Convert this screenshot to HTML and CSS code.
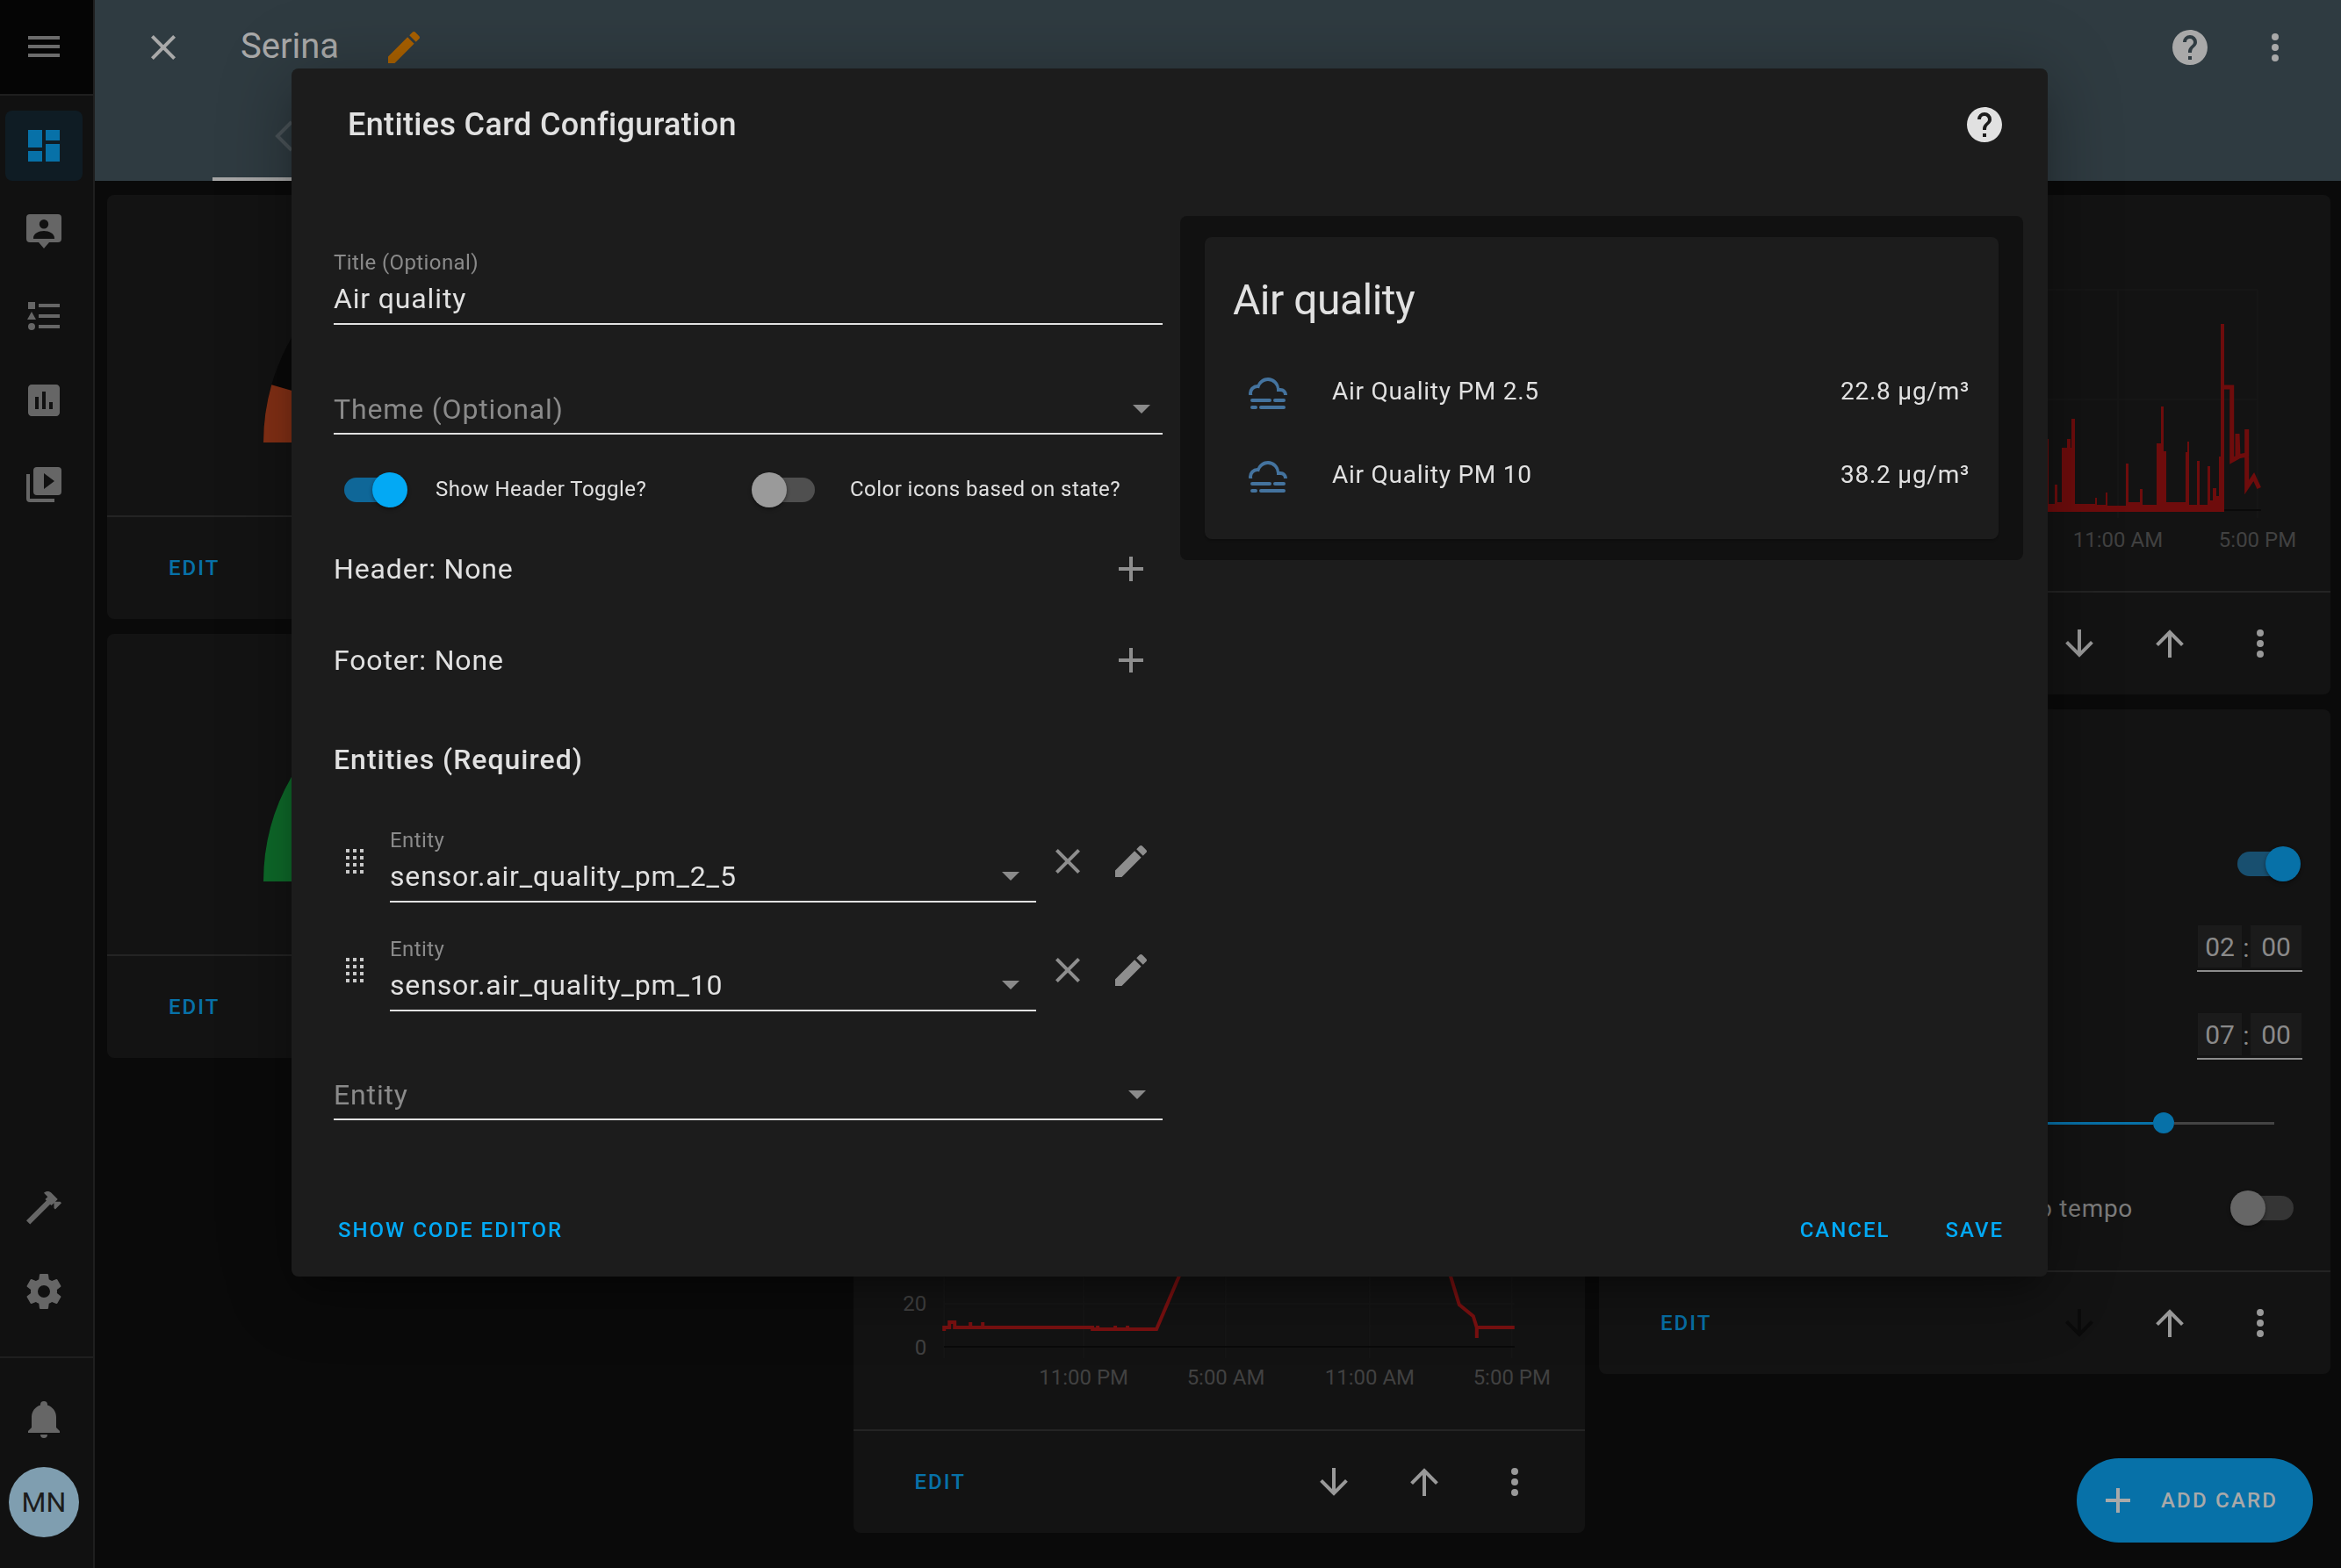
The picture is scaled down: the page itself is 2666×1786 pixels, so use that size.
FILE: index.html
```html
<!DOCTYPE html>
<html lang="en">

<head>
    <meta charset="UTF-8">
    <title>Serina - Entities Card Configuration</title>
    <link rel="stylesheet" href="styles.css">
</head>

<body>
    <svg class="sprite" xmlns="http://www.w3.org/2000/svg">
        <symbol id="i-menu" viewBox="0 0 24 24"><path d="M3,6H21V8H3V6M3,11H21V13H3V11M3,16H21V18H3V16Z" /></symbol>
        <symbol id="i-dashboard" viewBox="0 0 24 24"><path d="M13,3V9H21V3M13,21H21V11H13M3,21H11V15H3M3,13H11V3H3V13Z" /></symbol>
        <symbol id="i-person" viewBox="0 0 24 24"><path fill-rule="evenodd" d="M4 2H20A2 2 0 0 1 22 4V16A2 2 0 0 1 20 18H15L12 21.5L9 18H4A2 2 0 0 1 2 16V4A2 2 0 0 1 4 2Z M12 5A2.6 2.6 0 1 0 12 10.2A2.6 2.6 0 1 0 12 5Z M6 15.5C6 13 9 11.5 12 11.5C15 11.5 18 13 18 15.5V16H6Z" /></symbol>
        <symbol id="i-list" viewBox="0 0 24 24"><path d="M5,9.5L7.5,14H2.5L5,9.5M3,4H7V8H3V4M5,20A2,2 0 0,0 7,18A2,2 0 0,0 5,16A2,2 0 0,0 3,18A2,2 0 0,0 5,20M9,5V7H21V5H9M9,19H21V17H9V19M9,13H21V11H9V13Z" /></symbol>
        <symbol id="i-chart" viewBox="0 0 24 24"><path d="M9 17H7V10H9V17M13 17H11V7H13V17M17 17H15V13H17V17M19 3H5C3.9 3 3 3.9 3 5V19C3 20.1 3.9 21 5 21H19C20.1 21 21 20.1 21 19V5C21 3.9 20.1 3 19 3Z" /></symbol>
        <symbol id="i-play" viewBox="0 0 24 24"><path d="M4,6H2V20A2,2 0 0,0 4,22H18V20H4V6M20,2H8A2,2 0 0,0 6,4V16A2,2 0 0,0 8,18H20A2,2 0 0,0 22,16V4A2,2 0 0,0 20,2M12,14.5V5.5L18,10L12,14.5Z" /></symbol>
        <symbol id="i-hammer" viewBox="0 0 24 24"><path d="M2 19.63L13.43 8.2L12.72 7.5L14.14 6.07L12 3.89C13.2 2.7 15.09 2.7 16.27 3.89L19.87 7.5L18.45 8.91H21.29L22 9.62L18.45 13.21L17.74 12.5V9.62L16.27 11.04L15.56 10.33L4.13 21.76L2 19.63Z" /></symbol>
        <symbol id="i-cog" viewBox="0 0 24 24"><path d="M12,15.5A3.5,3.5 0 0,1 8.5,12A3.5,3.5 0 0,1 12,8.5A3.5,3.5 0 0,1 15.5,12A3.5,3.5 0 0,1 12,15.5M19.43,12.97C19.47,12.65 19.5,12.33 19.5,12C19.5,11.67 19.47,11.34 19.43,11L21.54,9.37C21.73,9.22 21.78,8.95 21.66,8.73L19.66,5.27C19.54,5.05 19.27,4.96 19.05,5.05L16.56,6.05C16.04,5.66 15.5,5.32 14.87,5.07L14.5,2.42C14.46,2.18 14.25,2 14,2H10C9.75,2 9.54,2.18 9.5,2.42L9.13,5.07C8.5,5.32 7.96,5.66 7.44,6.05L4.95,5.05C4.73,4.96 4.46,5.05 4.34,5.27L2.34,8.73C2.21,8.95 2.27,9.22 2.46,9.37L4.57,11C4.53,11.34 4.5,11.67 4.5,12C4.5,12.33 4.53,12.65 4.57,12.97L2.46,14.63C2.27,14.78 2.21,15.05 2.34,15.27L4.34,18.73C4.46,18.95 4.73,19.03 4.95,18.95L7.44,17.94C7.96,18.34 8.5,18.68 9.13,18.93L9.5,21.58C9.54,21.82 9.75,22 10,22H14C14.25,22 14.46,21.82 14.5,21.58L14.87,18.93C15.5,18.67 16.04,18.34 16.56,17.94L19.05,18.95C19.27,19.03 19.54,18.95 19.66,18.73L21.66,15.27C21.78,15.05 21.73,14.78 21.54,14.63L19.43,12.97Z" /></symbol>
        <symbol id="i-bell" viewBox="0 0 24 24"><path d="M21,19V20H3V19L5,17V11C5,7.9 7.03,5.17 10,4.29C10,4.19 10,4.1 10,4A2,2 0 0,1 12,2A2,2 0 0,1 14,4C14,4.1 14,4.19 14,4.29C16.97,5.17 19,7.9 19,11V17L21,19M14,21A2,2 0 0,1 12,23A2,2 0 0,1 10,21" /></symbol>
        <symbol id="i-close" viewBox="0 0 24 24"><path d="M19,6.41L17.59,5L12,10.59L6.41,5L5,6.41L10.59,12L5,17.59L6.41,19L12,13.41L17.59,19L19,17.59L13.41,12L19,6.41Z" /></symbol>
        <symbol id="i-pencil" viewBox="0 0 24 24"><path d="M20.71,7.04C21.1,6.65 21.1,6 20.71,5.63L18.37,3.29C18,2.9 17.35,2.9 16.96,3.29L15.12,5.12L18.87,8.87M3,17.25V21H6.75L17.81,9.93L14.06,6.18L3,17.25Z" /></symbol>
        <symbol id="i-plus" viewBox="0 0 24 24"><path d="M19,13H13V19H11V13H5V11H11V5H13V11H19V13Z" /></symbol>
        <symbol id="i-help" viewBox="0 0 24 24"><path d="M15.07,11.25L14.17,12.17C13.45,12.89 13,13.5 13,15H11V14.5C11,13.39 11.45,12.39 12.17,11.67L13.41,10.41C13.78,10.05 14,9.55 14,9C14,7.89 13.1,7 12,7A2,2 0 0,0 10,9H8A4,4 0 0,1 12,5A4,4 0 0,1 16,9C16,9.88 15.64,10.67 15.07,11.25M13,19H11V17H13M12,2A10,10 0 0,0 2,12A10,10 0 0,0 12,22A10,10 0 0,0 22,12C22,6.47 17.5,2 12,2Z" /></symbol>
        <symbol id="i-dots" viewBox="0 0 24 24"><path d="M12,16A2,2 0 0,1 14,18A2,2 0 0,1 12,20A2,2 0 0,1 10,18A2,2 0 0,1 12,16M12,10A2,2 0 0,1 14,12A2,2 0 0,1 12,14A2,2 0 0,1 10,12A2,2 0 0,1 12,10M12,4A2,2 0 0,1 14,6A2,2 0 0,1 12,8A2,2 0 0,1 10,6A2,2 0 0,1 12,4Z" /></symbol>
        <symbol id="i-down" viewBox="0 0 24 24"><path d="M11,4H13V16L18.5,10.5L19.92,11.92L12,19.84L4.08,11.92L5.5,10.5L11,16V4Z" /></symbol>
        <symbol id="i-up" viewBox="0 0 24 24"><path d="M13,20H11V8L5.5,13.5L4.08,12.08L12,4.16L19.92,12.08L18.5,13.5L13,8V20Z" /></symbol>
        <symbol id="i-drag" viewBox="0 0 24 24"><path d="M7,19V17H9V19H7M11,19V17H13V19H11M15,19V17H17V19H15M7,15V13H9V15H7M11,15V13H13V15H11M15,15V13H17V15H15M7,11V9H9V11H7M11,11V9H13V11H11M15,11V9H17V11H15M7,7V5H9V7H7M11,7V5H13V7H11M15,7V5H17V7H15Z" /></symbol>
        <symbol id="i-fog" viewBox="0 0 24 24"><path d="M3,15H13A1,1 0 0,1 14,16A1,1 0 0,1 13,17H3A1,1 0 0,1 2,16A1,1 0 0,1 3,15M16,15H21A1,1 0 0,1 22,16A1,1 0 0,1 21,17H16A1,1 0 0,1 15,16A1,1 0 0,1 16,15M1,12A5,5 0 0,1 6,7C7,4.65 9.3,3 12,3C15.43,3 18.24,5.66 18.5,9.03L19,9C21.19,9 22.97,10.76 23,13H21A2,2 0 0,0 19,11H17V10A5,5 0 0,0 12,5C9.5,5 7.45,6.82 7.06,9.19C6.73,9.07 6.37,9 6,9A3,3 0 0,0 3,12C3,12.35 3.06,12.69 3.17,13H1.1L1,12M3,19H5A1,1 0 0,1 6,20A1,1 0 0,1 5,21H3A1,1 0 0,1 2,20A1,1 0 0,1 3,19M8,19H21A1,1 0 0,1 22,20A1,1 0 0,1 21,21H8A1,1 0 0,1 7,20A1,1 0 0,1 8,19Z" /></symbol>
    </svg>

    <aside class="sidebar">
        <div class="side-top"><svg class="icon"><use href="#i-menu" /></svg></div>
        <nav class="side-list">
            <a class="side-item side-item-active"><svg class="icon"><use href="#i-dashboard" /></svg></a>
            <a class="side-item"><svg class="icon"><use href="#i-person" /></svg></a>
            <a class="side-item"><svg class="icon"><use href="#i-list" /></svg></a>
            <a class="side-item"><svg class="icon"><use href="#i-chart" /></svg></a>
            <a class="side-item"><svg class="icon"><use href="#i-play" /></svg></a>
        </nav>
        <nav class="side-tools">
            <a class="side-item"><svg class="icon"><use href="#i-hammer" /></svg></a>
            <a class="side-item"><svg class="icon"><use href="#i-cog" /></svg></a>
        </nav>
        <div class="side-bottom">
            <a class="side-item"><svg class="icon"><use href="#i-bell" /></svg></a>
            <div class="avatar">MN</div>
        </div>
    </aside>

    <main class="main">
        <header class="topbar">
            <div class="toolbar">
                <svg class="icon icon-top"><use href="#i-close" /></svg>
                <span class="view-name">Serina</span>
                <svg class="icon icon-edit"><use href="#i-pencil" /></svg>
                <span class="toolbar-space"></span>
                <svg class="icon icon-top"><use href="#i-help" /></svg>
                <svg class="icon icon-top"><use href="#i-dots" /></svg>
            </div>
            <div class="tabs">
                <div class="tab">
                    <svg class="tab-icon" viewBox="0 0 24 24"><path d="M10 4L2 12L10 20" /></svg>
                </div>
            </div>
        </header>

        <div class="cards">
            <div class="col">
                <section class="card card-a">
                    <div class="card-body gauge-body">
                        <svg class="gauge" viewBox="0 0 476 238">
                            <path class="gauge-track" d="M40 238A198 198 0 0 1 436 238" />
                            <path class="gauge-red" d="M40 238A198 198 0 0 1 47.7 183.4" />
                        </svg>
                    </div>
                    <div class="card-actions"><span class="edit">EDIT</span></div>
                </section>
                <section class="card card-a">
                    <div class="card-body gauge-body">
                        <svg class="gauge" viewBox="0 0 476 238">
                            <path class="gauge-track" d="M40 238A198 198 0 0 1 436 238" />
                            <path class="gauge-green" d="M40 238A198 198 0 0 1 139 66.5" />
                        </svg>
                    </div>
                    <div class="card-actions"><span class="edit">EDIT</span></div>
                </section>
            </div>

            <div class="col">
                <section class="card card-tall">
                    <div class="card-body">
                        <svg class="chart" viewBox="972 222 833 1407">
                            <path class="grid" d="M1075 1454V1548M1234 1454V1548M1396 1454V1548M1560 1454V1548M1722 1454V1548M1075 1486H1725" />
                            <path class="axis" d="M1075 1535H1725" />
                            <path class="series" d="M1075 1517V1513H1081V1507H1087V1513H1105V1507V1513H1119V1507V1513H1244V1515H1250V1511V1515H1270V1511V1515H1284V1511V1515H1317L1343 1454L1390 1300M1610 1300L1652 1454L1662 1487L1678 1500L1682 1513V1525V1513H1725" />
                            <text class="chart-y" x="1055" y="1494">20</text>
                            <text class="chart-y" x="1055" y="1544">0</text>
                            <text class="chart-x" x="1234" y="1578">11:00 PM</text>
                            <text class="chart-x" x="1396" y="1578">5:00 AM</text>
                            <text class="chart-x" x="1560" y="1578">11:00 AM</text>
                            <text class="chart-x" x="1722" y="1578">5:00 PM</text>
                        </svg>
                    </div>
                    <div class="card-actions">
                        <span class="edit">EDIT</span>
                        <svg class="icon icon-action"><use href="#i-down" /></svg>
                        <svg class="icon icon-action"><use href="#i-up" /></svg>
                        <svg class="icon icon-action"><use href="#i-dots" /></svg>
                    </div>
                </section>
            </div>

            <div class="col">
                <section class="card card-b">
                    <div class="card-body">
                        <svg class="chart" viewBox="1821 222 833 451">
                            <path class="grid" d="M2412 330V590M2571 330V590M2332 330H2571M2332 455H2571" />
                            <path class="axis" d="M2332 581H2575" />
                            <path class="bars" d="M2320 583V500H2333V574H2340V552H2343V572H2348V510H2354V500H2358V510H2359V477H2363V574H2386V567H2388V575H2398V561H2400V576H2421V528H2424V572H2437V557H2440V575H2456V505H2461V463H2464V514H2467V572H2489V515H2491V503H2493V575H2502V525H2505V575H2514V531H2517V570H2520V556H2524V565H2527V520H2529V369H2533V583Z" />
                            <path class="series series-thick" d="M2533 441H2541.7V524.5L2548 521V494L2549 520L2558.7 518V489V555L2566.7 543L2572.7 556" />
                            <text class="chart-x" x="2412" y="623">11:00 AM</text>
                            <text class="chart-x" x="2571" y="623">5:00 PM</text>
                        </svg>
                    </div>
                    <div class="card-actions">
                        <span class="edit">EDIT</span>
                        <svg class="icon icon-action"><use href="#i-down" /></svg>
                        <svg class="icon icon-action"><use href="#i-up" /></svg>
                        <svg class="icon icon-action"><use href="#i-dots" /></svg>
                    </div>
                </section>
                <section class="card card-c">
                    <div class="card-body controls">
                        <div class="control-row"><span class="switch switch-on switch-dim"></span></div>
                        <div class="time">
                            <span class="time-part">02</span><span class="time-sep">:</span><span class="time-part time-part-wide">00</span>
                        </div>
                        <div class="time time-next">
                            <span class="time-part">07</span><span class="time-sep">:</span><span class="time-part time-part-wide">00</span>
                        </div>
                        <div class="slider">
                            <span class="slider-fill"></span>
                            <span class="slider-thumb"></span>
                            <span class="slider-rest"></span>
                        </div>
                        <div class="control-row control-tempo">
                            <span class="control-label">Modo tempo</span>
                            <span class="switch switch-off switch-dim"></span>
                        </div>
                    </div>
                    <div class="card-actions">
                        <span class="edit">EDIT</span>
                        <svg class="icon icon-action icon-disabled"><use href="#i-down" /></svg>
                        <svg class="icon icon-action"><use href="#i-up" /></svg>
                        <svg class="icon icon-action"><use href="#i-dots" /></svg>
                    </div>
                </section>
            </div>
        </div>
    </main>

    <button class="fab">
        <svg class="icon"><use href="#i-plus" /></svg>
        <span>ADD CARD</span>
    </button>

    <div class="dialog">
        <div class="dialog-title">
            <h2>Entities Card Configuration</h2>
            <svg class="icon icon-help"><use href="#i-help" /></svg>
        </div>

        <div class="dialog-body">
            <div class="editor">
                <div class="field">
                    <div class="field-label">Title (Optional)</div>
                    <div class="field-value"><span>Air quality</span></div>
                </div>
                <div class="field field-empty field-theme">
                    <div class="field-value"><span class="placeholder">Theme (Optional)</span><i class="caret"></i></div>
                </div>

                <div class="switches">
                    <div class="switch-item">
                        <span class="switch switch-on"></span>
                        <span class="switch-label">Show Header Toggle?</span>
                    </div>
                    <div class="switch-item">
                        <span class="switch switch-off"></span>
                        <span class="switch-label switch-label-off">Color icons based on state?</span>
                    </div>
                </div>

                <div class="add-row"><span>Header: None</span><svg class="icon icon-form"><use href="#i-plus" /></svg></div>
                <div class="add-row"><span>Footer: None</span><svg class="icon icon-form"><use href="#i-plus" /></svg></div>

                <h3 class="section-title">Entities (Required)</h3>

                <div class="entity-row">
                    <svg class="icon icon-drag"><use href="#i-drag" /></svg>
                    <div class="field">
                        <div class="field-label">Entity</div>
                        <div class="field-value"><span>sensor.air_quality_pm_2_5</span><i class="caret"></i></div>
                    </div>
                    <svg class="icon icon-form icon-remove"><use href="#i-close" /></svg>
                    <svg class="icon icon-form icon-pen"><use href="#i-pencil" /></svg>
                </div>
                <div class="entity-row">
                    <svg class="icon icon-drag"><use href="#i-drag" /></svg>
                    <div class="field">
                        <div class="field-label">Entity</div>
                        <div class="field-value"><span>sensor.air_quality_pm_10</span><i class="caret"></i></div>
                    </div>
                    <svg class="icon icon-form icon-remove"><use href="#i-close" /></svg>
                    <svg class="icon icon-form icon-pen"><use href="#i-pencil" /></svg>
                </div>
                <div class="field field-empty">
                    <div class="field-value"><span class="placeholder">Entity</span><i class="caret"></i></div>
                </div>
            </div>

            <div class="preview">
                <div class="preview-card">
                    <div class="preview-title">Air quality</div>
                    <div class="preview-row">
                        <svg class="icon icon-state"><use href="#i-fog" /></svg>
                        <span class="preview-name">Air Quality PM 2.5</span>
                        <span class="preview-value">22.8 µg/m³</span>
                    </div>
                    <div class="preview-row">
                        <svg class="icon icon-state"><use href="#i-fog" /></svg>
                        <span class="preview-name">Air Quality PM 10</span>
                        <span class="preview-value">38.2 µg/m³</span>
                    </div>
                </div>
            </div>
        </div>

        <div class="dialog-actions">
            <span class="dialog-btn">SHOW CODE EDITOR</span>
            <span class="dialog-right">
                <span class="dialog-btn">CANCEL</span>
                <span class="dialog-btn">SAVE</span>
            </span>
        </div>
    </div>
</body>

</html>
```

FILE: styles.css
```css
* {
    box-sizing: border-box;
}

html,
body {
    margin: 0;
    height: 100%;
}

body {
    display: flex;
    width: 2666px;
    height: 1786px;
    overflow: hidden;
    background-color: #0a0a0a;
    color: #e1e1e1;
    font-family: Roboto, "Liberation Sans", sans-serif;
}

.sprite {
    display: none;
}

.icon {
    display: block;
    flex: none;
    width: 48px;
    height: 48px;
    fill: currentColor;
}

/* sidebar */
.sidebar {
    display: flex;
    flex-direction: column;
    flex: none;
    width: 108px;
    height: 1786px;
    background-color: #111;
    border-right: 2px solid #1f1f1f;
    color: #666;
}

.side-top {
    display: flex;
    align-items: center;
    flex: none;
    height: 109px;
    padding: 0 0 1px 26px;
    background-color: #050505;
    border-bottom: 2px solid #1f1f1f;
    color: #6c6c6c;
}

.side-list,
.side-tools,
.side-bottom {
    display: flex;
    flex-direction: column;
}

.side-list {
    padding-top: 9px;
}

.side-item {
    display: flex;
    align-items: center;
    justify-content: center;
    flex: none;
    width: 88px;
    height: 80px;
    margin: 8px 0 8px 6px;
    border-radius: 8px;
}

.side-item-active {
    margin-bottom: 10px;
    background-color: #0f1c24;
    color: #0771a8;
}

.side-tools {
    margin-top: auto;
    padding-bottom: 26px;
}

.side-bottom {
    flex: none;
    height: 241px;
    padding-top: 21px;
    border-top: 2px solid #1f1f1f;
}

.avatar {
    display: flex;
    align-items: center;
    justify-content: center;
    flex: none;
    width: 80px;
    height: 80px;
    margin: 7px 0 0 10px;
    border-radius: 50%;
    background-color: #7f9eb0;
    color: #1c1c1c;
    font-size: 32px;
}

/* top bar */
.main {
    display: flex;
    flex-direction: column;
    flex: 1;
    min-width: 0;
}

.topbar {
    flex: none;
    height: 206px;
    background-color: #2f3b41;
}

.toolbar {
    display: flex;
    align-items: center;
    height: 108px;
    padding: 0 51px 0 54px;
}

.icon-top {
    color: #a9a9a9;
}

.icon-top+.icon-top {
    margin-left: 49px;
}

.view-name {
    margin: 0 0 4px 64px;
    color: #a9a9a9;
    font-size: 40px;
}

.icon-edit {
    margin-left: 50px;
    color: #a86000;
}

.toolbar-space {
    flex: 1;
}

.tabs {
    padding-left: 134px;
}

.tab {
    display: flex;
    align-items: center;
    width: 220px;
    height: 98px;
    padding-left: 70px;
    border-bottom: 4px solid #a6a6a6;
}

.tab-icon {
    width: 48px;
    height: 48px;
    fill: none;
    stroke: #4a5358;
    stroke-width: 2;
}

/* dashboard cards */
.cards {
    display: flex;
    gap: 16.5px;
    padding: 16px 0 0 14px;
}

.col {
    display: flex;
    flex-direction: column;
    gap: 17px;
    width: 833px;
}

.card {
    display: flex;
    flex-direction: column;
    background-color: #131313;
    border-radius: 8px;
}

.card-a {
    height: 483px;
}

.card-b {
    height: 569px;
}

.card-c {
    height: 757px;
}

.card-tall {
    height: 1524px;
}

.card-body {
    flex: 1;
    min-height: 0;
}

.card-actions {
    display: flex;
    align-items: center;
    gap: 55px;
    flex: none;
    height: 118px;
    padding: 0 56px 0 70px;
    border-top: 2px solid #242424;
    color: #999;
}

.edit {
    margin-right: auto;
    color: #0771a8;
    font-size: 24px;
    font-weight: 500;
    letter-spacing: 2px;
}

.icon-disabled {
    color: #0b0b0b;
}

.gauge-body {
    padding: 44px 0 0 178px;
}

.gauge {
    display: block;
    width: 476px;
    height: 238px;
    fill: none;
    stroke-width: 80;
}

.gauge-track {
    stroke: #090909;
}

.gauge-red {
    stroke: #843015;
}

.gauge-green {
    stroke: #0e6b2a;
}

.chart {
    display: block;
    width: 100%;
    height: 100%;
    fill: none;
}

.grid {
    stroke: #161616;
    stroke-width: 2;
}

.axis {
    stroke: #0a0a0a;
    stroke-width: 2;
}

.series {
    stroke: #7a1010;
    stroke-width: 4;
}

.series-thick {
    stroke: #6e0c0c;
    stroke-width: 5;
}

.bars {
    fill: #6e0c0c;
}

.chart-x,
.chart-y {
    fill: #414141;
    font-size: 24px;
}

.chart-x {
    text-anchor: middle;
}

.chart-y {
    text-anchor: end;
}

/* card controls */
.controls {
    display: flex;
    flex-direction: column;
    align-items: flex-end;
    padding: 156px 34px 0 70px;
}

.control-row {
    display: flex;
    align-items: center;
    justify-content: flex-end;
    height: 40px;
}

.control-tempo {
    margin: 65px 8px 0 0;
}

.control-label {
    margin-right: 111px;
    color: #7c7c7c;
    font-size: 28px;
    letter-spacing: .7px;
}

.time {
    display: flex;
    width: 120px;
    height: 53px;
    margin: 50px -2px 0 0;
    border-bottom: 2px solid #8c8c8c;
    color: #8a8a8a;
    font-size: 30px;
}

.time-next {
    margin-top: 47px;
}

.time-part {
    display: flex;
    align-items: center;
    justify-content: center;
    width: 50px;
    height: 48px;
    margin-left: 1px;
    background-color: #1b1b1b;
}

.time-part-wide {
    width: 58px;
    margin-left: 0;
}

.time-sep {
    display: flex;
    align-items: center;
    justify-content: center;
    width: 10px;
}

.slider {
    display: flex;
    align-items: center;
    align-self: stretch;
    height: 24px;
    margin: 60px 30px 0 0;
}

.slider-fill {
    flex: 1;
    height: 3px;
    background-color: #0771a8;
}

.slider-thumb {
    flex: none;
    width: 24px;
    height: 24px;
    border-radius: 50%;
    background-color: #0771a8;
}

.slider-rest {
    flex: none;
    width: 114px;
    height: 3px;
    background-color: #444;
}

/* switches */
.switch {
    position: relative;
    display: block;
    flex: none;
    width: 72px;
    height: 40px;
}

.switch::before,
.switch::after {
    content: "";
    position: absolute;
}

.switch::before {
    top: 6px;
    width: 64px;
    height: 28px;
    border-radius: 14px;
}

.switch::after {
    top: 0;
    width: 40px;
    height: 40px;
    border-radius: 50%;
    box-shadow: 0 2px 4px rgba(0, 0, 0, .4);
}

.switch-on::before {
    left: 0;
    background-color: #0f6798;
}

.switch-on::after {
    right: 0;
    background-color: #03a9f4;
}

.switch-off::before {
    right: 0;
    background-color: #4f4f4f;
}

.switch-off::after {
    left: 0;
    background-color: #9a9a9a;
}

.switch-dim.switch-on::before {
    background-color: #184f6f;
}

.switch-dim.switch-on::after {
    background-color: #0771a8;
}

.switch-dim.switch-off::before {
    background-color: #353535;
}

.switch-dim.switch-off::after {
    background-color: #666;
}

/* floating button */
.fab {
    position: fixed;
    left: 2365px;
    top: 1661px;
    display: flex;
    align-items: center;
    width: 269px;
    height: 96px;
    padding: 0 0 0 23px;
    border: 0;
    border-radius: 48px;
    background-color: #0771a8;
    color: #a9a9a9;
    font-family: inherit;
    font-size: 24px;
    font-weight: 500;
    letter-spacing: 2.2px;
}

.fab span {
    margin-left: 25px;
}

/* dialog */
.dialog {
    position: fixed;
    left: 332px;
    top: 78px;
    display: flex;
    flex-direction: column;
    width: 2000px;
    height: 1376px;
    background-color: #1c1c1c;
    border-radius: 8px;
    box-shadow: 0 22px 76px 6px rgba(0, 0, 0, .18), 0 22px 30px -14px rgba(0, 0, 0, .3), 0 0 90px 10px rgba(0, 0, 0, .1);
}

.dialog-title {
    display: flex;
    align-items: center;
    justify-content: space-between;
    flex: none;
    height: 128px;
    padding: 0 48px 0 64px;
}

.dialog-title h2 {
    margin: 0;
    font-size: 36px;
    font-weight: 500;
    letter-spacing: .35px;
}

.icon-help {
    color: #e1e1e1;
}

.dialog-body {
    display: flex;
    flex: 1;
    gap: 20px;
    min-height: 0;
    padding: 40px 28px 0 48px;
}

.editor {
    flex: none;
    width: 944px;
    padding-top: 12px;
}

.field {
    flex: none;
    height: 112px;
    margin-bottom: 12px;
    padding-top: 28px;
    border-bottom: 2px solid #e1e1e1;
}

.field-empty {
    padding-top: 64px;
}

.field-theme {
    height: 113px;
    padding-top: 65px;
}

.field-theme .caret {
    margin-right: 14px;
}

.field-label {
    height: 26px;
    margin-bottom: 9px;
    color: #8a8a8a;
    font-size: 24px;
    line-height: 26px;
    letter-spacing: .4px;
}

.field-value {
    display: flex;
    align-items: center;
    justify-content: space-between;
    height: 38px;
    font-size: 32px;
    line-height: 38px;
    letter-spacing: .85px;
}

.placeholder {
    color: #8a8a8a;
}

.caret {
    width: 0;
    height: 0;
    margin-right: 19px;
    border-top: 10px solid #8a8a8a;
    border-left: 10px solid transparent;
    border-right: 10px solid transparent;
}

.switches {
    display: grid;
    grid-template-columns: 464px 1fr;
    height: 56px;
    margin: 35px 0 10px;
    padding: 8px 0 0 12px;
}

.switch-item {
    display: flex;
    align-items: center;
    gap: 32px;
    height: 40px;
}

.switch-label {
    margin-bottom: 3px;
    font-size: 24px;
    letter-spacing: .45px;
}

.switch-label-off {
    margin-left: 8px;
}

.add-row {
    display: flex;
    align-items: center;
    justify-content: space-between;
    height: 104px;
    padding-right: 12px;
    font-size: 32px;
    letter-spacing: .85px;
}

.icon-form {
    color: #8e8e8e;
}

.section-title {
    height: 48px;
    margin: 38px 0 26px;
    font-size: 32px;
    font-weight: 500;
    line-height: 46px;
    letter-spacing: 1px;
}

.entity-row {
    display: flex;
    align-items: flex-start;
}

.entity-row .field {
    width: 736px;
    margin-left: 16px;
}

.icon-drag,
.icon-remove,
.icon-pen {
    margin-top: 41px;
}

.icon-drag {
    color: #c8c8c8;
}

.icon-remove {
    margin-left: 12px;
}

.icon-pen {
    margin-left: 24px;
}

.preview {
    flex: none;
    width: 960px;
    height: 392px;
    padding: 24px 28px;
    background-color: #111;
    border-radius: 8px;
}

.preview-card {
    height: 344px;
    background-color: #1c1c1c;
    border-radius: 8px;
    box-shadow: 0 2px 2px rgba(0, 0, 0, .2);
}

.preview-title {
    height: 130px;
    padding: 44px 0 0 32px;
    font-size: 48px;
    line-height: 56px;
    letter-spacing: -.5px;
}

.preview-row {
    display: flex;
    align-items: center;
    height: 95px;
    padding: 0 33px 0 48px;
    font-size: 28px;
    letter-spacing: .75px;
}

.icon-state {
    color: #44739e;
}

.preview-name {
    flex: 1;
    margin: 0 0 5px 49px;
}

.preview-value {
    margin-bottom: 5px;
}

.dialog-actions {
    display: flex;
    align-items: center;
    justify-content: space-between;
    flex: none;
    height: 106px;
    padding: 0 50px 0 53px;
}

.dialog-right {
    display: flex;
    gap: 63px;
}

.dialog-btn {
    color: #03a9f4;
    font-size: 24px;
    font-weight: 500;
    letter-spacing: 2px;
}
```
